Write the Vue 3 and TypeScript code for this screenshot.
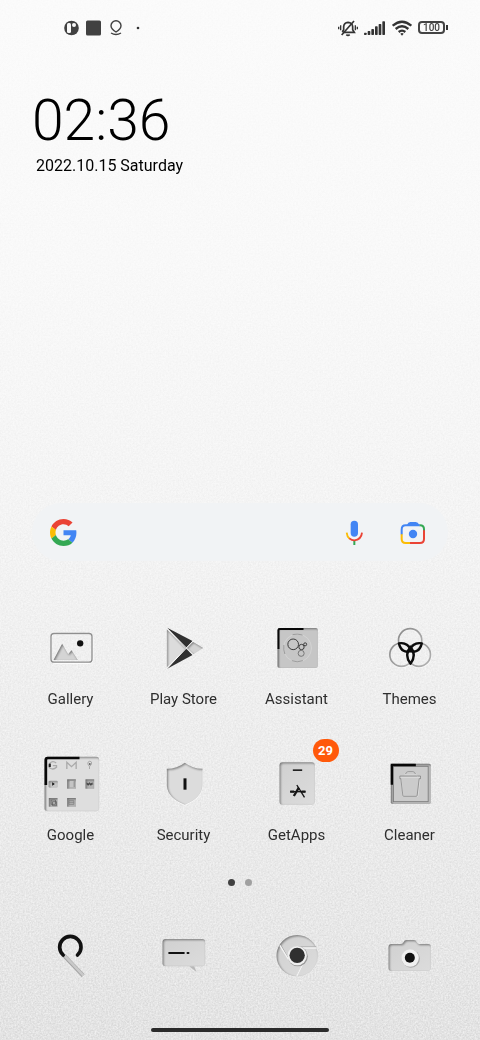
<script setup lang="ts">
interface AppItem {
  id: string
  name: string
  badge?: number
}

const apps: AppItem[] = [
  { id: 'gallery', name: 'Gallery' },
  { id: 'play', name: 'Play Store' },
  { id: 'assistant', name: 'Assistant' },
  { id: 'themes', name: 'Themes' },
  { id: 'folder', name: 'Google' },
  { id: 'security', name: 'Security' },
  { id: 'getapps', name: 'GetApps', badge: 29 },
  { id: 'cleaner', name: 'Cleaner' },
]

const dock: AppItem[] = [
  { id: 'phone', name: 'Phone' },
  { id: 'messages', name: 'Messages' },
  { id: 'chrome', name: 'Chrome' },
  { id: 'camera', name: 'Camera' },
]
</script>

<template>
  <main class="home">
    <svg class="grain" aria-hidden="true">
      <filter id="grain" x="0" y="0" width="100%" height="100%" color-interpolation-filters="sRGB">
        <feTurbulence type="fractalNoise" baseFrequency="0.6" numOctaves="3" seed="4" />
        <feColorMatrix values="1 0 0 0 0  1 0 0 0 0  1 0 0 0 0  0 0 0 0 1" />
      </filter>
      <rect width="100%" height="100%" filter="url(#grain)" />
    </svg>

    <svg class="sprite" width="0" height="0" aria-hidden="true">
      <defs>
        <filter id="inset" x="-10%" y="-10%" width="120%" height="120%" color-interpolation-filters="sRGB">
          <feComponentTransfer in="SourceAlpha"><feFuncA type="table" tableValues="1 0" /></feComponentTransfer>
          <feOffset dx="3" dy="3" />
          <feGaussianBlur stdDeviation="2.500" />
          <feComposite operator="in" in2="SourceAlpha" result="edge" />
          <feComponentTransfer in="edge" result="shade"><feFuncA type="linear" slope="0.45" /></feComponentTransfer>
          <feMerge><feMergeNode in="SourceGraphic" /><feMergeNode in="shade" /></feMerge>
        </filter>
        <linearGradient id="plate" x1="0" y1="0" x2="1" y2="1">
          <stop offset="0" stop-color="#d0d0d0" /><stop offset="1" stop-color="#dcdcdc" />
        </linearGradient>
        <linearGradient id="ring" x1="0" y1="0" x2="1" y2="1">
          <stop offset="0" stop-color="#8a8a8a" /><stop offset="1" stop-color="#b4b4b4" />
        </linearGradient>
      </defs>

      <symbol id="gallery" viewBox="25.5 18 192 192">
        <rect x="63" y="73" width="124" height="87" rx="9" fill="none" stroke="#fff" stroke-width="3" />
        <rect x="61.500" y="70.500" width="123" height="86" rx="9" fill="none" stroke="#8f8f8f" stroke-width="4" />
        <path d="M69 150 95 101l18 32 10-12 19 29z" fill="#d4d4d4" filter="url(#inset)" />
        <circle cx="149" cy="100" r="9.500" fill="#111" />
      </symbol>

      <symbol id="play" viewBox="364.5 18 192 192">
        <path d="M409 58v114l55-57z" fill="#dcdcdc" filter="url(#inset)" />
        <path d="M467 115l20-20 31 19-30 19z" fill="#d3d3d3" filter="url(#inset)" />
        <path d="M410 53l76 40-20 21z" fill="#303030" />
        <path d="M410 176l76-41-20-20z" fill="#303030" />
        <path d="M408 54l80 80M410 175l78-82" stroke="#f8f8f8" stroke-width="3" />
      </symbol>

      <symbol id="assistant" viewBox="43.5 18 192 192">
        <rect x="81" y="54" width="121" height="120" rx="6" fill="#c6c6c6" filter="url(#inset)" />
        <path d="M84 171v-57" stroke="#888" stroke-width="4" />
        <path d="M84 117V61q0-4 4-4h71" fill="none" stroke="#080808" stroke-width="6" />
        <circle cx="141" cy="114" r="42" fill="none" stroke="#dadada" stroke-width="2" />
        <path d="M126 74q15-4 30 1M100 105q-2 14 3 27M124 152q16 7 33 0" fill="none" stroke="#818181" stroke-width="2" />
        <g fill="none" stroke="#3c3c3c" stroke-width="3">
          <circle cx="128" cy="103" r="16" />
          <circle cx="153" cy="111" r="8" />
          <circle cx="164" cy="103" r="4.500" />
          <circle cx="152" cy="130" r="9" stroke="#777" />
        </g>
      </symbol>

      <symbol id="themes" viewBox="382.5 18 192 192">
        <g fill="none" stroke="#fff" stroke-width="4" opacity=".8">
          <circle cx="480" cy="93" r="36" /><circle cx="454" cy="136" r="36" /><circle cx="506" cy="136" r="36" />
        </g>
        <g fill="none" stroke="url(#ring)" stroke-width="5">
          <circle cx="479" cy="91" r="35" /><circle cx="453" cy="134" r="35" /><circle cx="505" cy="134" r="35" />
        </g>
        <g fill="none" stroke="#0c0c0c" stroke-width="7" stroke-linejoin="round">
          <path d="M445 100q25-5 38 22-29 12-38-22z" />
          <path d="M514 100q-25-5-38 22 29 12 38-22z" />
          <path d="M480 110q-20 25 0 51 20-26 0-51z" />
        </g>
      </symbol>

      <symbol id="folder" viewBox="25.5 36 192 192">
        <rect x="42" y="50" width="164" height="164" rx="9" fill="#dedede" filter="url(#inset)" />
        <path d="M45 210v-78" stroke="#999" stroke-width="4" />
        <path d="M46 135V60q0-6 6-6h95" fill="none" stroke="#080808" stroke-width="8" />
        <g fill="none" stroke="#aaa" stroke-width="4">
          <path d="M77 69q-10-8-18 0t-1 15q10 7 20-2v-5H67" />
          <path d="M109 87V67l14 13 14-13v20" />
          <path d="M177 87v-7q-8-9-4-14 5-5 10 0 3 5-6 14" stroke-width="3" />
        </g>
        <path d="M55 71h6v10h-6z" fill="#222" />
        <circle cx="178" cy="72" r="2.500" fill="#222" />
        <rect x="54" y="122" width="28" height="21" rx="4" fill="#c8c8c8" filter="url(#inset)" />
        <path d="M65 127l8 5-8 5z" fill="#111" />
        <g fill="#b4b4b4" filter="url(#inset)">
          <rect x="110" y="118" width="26" height="28" /><rect x="165" y="118" width="26" height="28" />
          <rect x="55" y="174" width="26" height="26" /><rect x="110" y="174" width="26" height="26" />
        </g>
        <path d="M118 123h12v18h-12z" fill="#c4c4c4" />
        <path d="M131 124v17" stroke="#777" stroke-width="2" />
        <path d="M168 132h20M169 128l4 8 4-8 4 8 4-8" fill="none" stroke="#444" stroke-width="3" />
        <path d="M62 180h13v13H62zM66 185h12v12H66z" fill="none" stroke="#555" stroke-width="2" />
        <path d="M115 182h15v11h-15zM115 187h15" fill="none" stroke="#777" stroke-width="2" />
      </symbol>

      <symbol id="security" viewBox="364.5 36 192 192">
        <path d="M463 72q23 18 54 18v49q-4 39-54 57-50-18-54-57V90q31 0 54-18z" fill="#fff" />
        <path d="M463 68q23 18 53 18v51q-3 38-53 57-51-19-54-57V86q31 0 54-18z" fill="#dcdcdc" filter="url(#inset)" />
        <path d="M459 115h9v34h-9z" fill="#111" />
      </symbol>

      <symbol id="getapps" viewBox="43.5 66 192 192">
        <rect x="87" y="97" width="106" height="127" rx="9" fill="url(#plate)" filter="url(#inset)" />
        <path d="M127 118h28v5h-28z" fill="#222" />
        <path d="M139 165l23 37" stroke="#161616" stroke-width="4" />
        <path d="M145 173l-15 25M119 185h12M153 185h12" stroke="#161616" stroke-width="7" />
        <path d="M119 185h46" stroke="#161616" stroke-width="4" />
      </symbol>

      <symbol id="cleaner" viewBox="382.5 66 192 192">
        <rect x="421" y="101" width="120" height="121" rx="5" fill="#bababa" filter="url(#inset)" />
        <rect x="429" y="109" width="104" height="106" fill="#cbcbcb" stroke="#7a7a7a" stroke-width="2.500" />
        <path d="M424 164v-59h72" fill="none" stroke="#080808" stroke-width="7" />
        <path d="M448 142h63M452 148l6 51h44l6-51M462 135h36l4 6M463 132q2-6 10-6h14q8 0 10 6" fill="none" stroke="#e6e6e6" stroke-width="2" />
        <path d="M448 138h62v8h-4l-6 50q0 3-3 3h-37q-3 0-3-3l-6-50h-3zM465 132q2-7 8-7h14q6 0 8 7" fill="none" stroke="#777" stroke-width="2" />
      </symbol>

      <symbol id="phone" viewBox="25.5 162 192 192">
        <path d="M100 256l58 61" stroke="#a2a2a2" stroke-width="12" />
        <path d="M102 257l57 60" stroke="#c9c9c9" stroke-width="8" />
        <path d="M98 255a32 32 0 1 1 43 0" fill="none" stroke="#111" stroke-width="11" stroke-linecap="round" />
      </symbol>

      <symbol id="messages" viewBox="364.5 162 192 192">
        <path d="M476 289l22 17-7-17z" fill="#b8b8b8" />
        <rect x="396" y="207" width="128" height="82" rx="9" fill="url(#plate)" filter="url(#inset)" />
        <path d="M416 249h44M471 249h3" stroke="#111" stroke-width="6" stroke-linecap="round" />
      </symbol>

      <symbol id="chrome" viewBox="43.5 162 192 192">
        <circle cx="140" cy="257" r="62" fill="url(#plate)" filter="url(#inset)" />
        <path d="M140 231h58M116 270 91 225M165 269l-25 47" stroke="#a0a0a0" stroke-width="3" />
        <path d="M140 234h58M115 270 88 226M163 271l-24 47" stroke="#f4f4f4" stroke-width="4" />
        <circle cx="142" cy="259" r="30" fill="#999" />
        <circle cx="140" cy="257" r="29" fill="#efefef" />
        <circle cx="140" cy="256" r="23" fill="#303030" />
      </symbol>

      <symbol id="camera" viewBox="382.5 162 192 192">
        <path d="M423 222h29q5 0 7-5 3-7 9-7h22q6 0 9 7 2 5 7 5h27q8 0 8 8v64q0 9-9 9h-109q-9 0-9-9v-63q0-9 9-9z" fill="url(#plate)" filter="url(#inset)" />
        <circle cx="481" cy="266" r="27" fill="#a8a8a8" />
        <circle cx="479" cy="264" r="26" fill="#f0f0f0" />
        <circle cx="478" cy="263" r="15" fill="#111" />
      </symbol>
    </svg>

    <header class="status">
      <div class="group">
        <svg width="16" height="16" viewBox="0 0 16 16">
          <circle cx="7.500" cy="8" r="7.300" fill="#414141" />
          <rect x="3" y="3" width="4" height="10" rx="1.500" fill="#f8f8f8" />
          <circle cx="10" cy="5" r="2" fill="#f8f8f8" />
        </svg>
        <svg width="16" height="16" viewBox="0 0 16 16"><rect x="0" y="0.500" width="15" height="15" rx="1.500" fill="#414141" /></svg>
        <svg width="16" height="16" viewBox="0 0 16 16" fill="none" stroke="#414141" stroke-width="1.400">
          <path d="M8 12Q3 9 3 5.800a5 5 0 0 1 10 0Q13 9 8 12zM3 13q5 3 10 0" />
        </svg>
        <svg width="16" height="16" viewBox="0 0 16 16"><circle cx="8" cy="8" r="1.300" fill="#333" /></svg>
      </div>
      <div class="group">
        <svg width="20" height="18" viewBox="0 0 60 54" fill="none" stroke="#333" stroke-width="5">
          <path d="M14 40h35l-5-8V23q-1-12-14-13-12 1-13 13v9l-4 7M25 47q5 5 10 0" />
          <path d="M11 48 48 6" />
          <path d="M8 19v15M2 23v8M52 19v15M58 23v8" stroke-width="4" />
        </svg>
        <svg width="22" height="16" viewBox="0 0 66 48" fill="#333">
          <rect x="0" y="38" width="8" height="7" rx="2" /><rect x="11" y="33" width="8" height="12" rx="2" />
          <rect x="22" y="27" width="8" height="18" rx="2" /><rect x="33" y="19" width="8" height="26" rx="2" />
          <rect x="44" y="12" width="8" height="33" rx="2" /><rect x="55" y="4" width="8" height="41" rx="2" />
        </svg>
        <svg width="20" height="16" viewBox="0 0 60 48" fill="none" stroke="#333" stroke-width="7">
          <path d="M2 17Q30-7 58 17M11 27q19-16 38 0M20 36q10-8 20 0" />
          <path d="M25 41q5-4 10 0l-5 6z" fill="#333" stroke="none" />
        </svg>
        <span class="battery"><span class="cell">100</span></span>
      </div>
    </header>

    <section class="clock">
      <time class="time">02:36</time>
      <p class="date">2022.10.15 Saturday</p>
    </section>

    <form class="search" role="search" @submit.prevent>
      <svg width="27" height="27" viewBox="0 0 48 48" aria-hidden="true">
        <path fill="#ea4335" d="M24 9.500c3.540 0 6.710 1.220 9.210 3.600l6.850-6.850C35.900 2.380 30.470 0 24 0 14.620 0 6.510 5.380 2.560 13.220l7.980 6.190C12.430 13.720 17.740 9.500 24 9.500z" />
        <path fill="#4285f4" d="M46.980 24.550c0-1.570-.15-3.090-.38-4.550H24v9.020h12.940c-.58 2.960-2.260 5.480-4.780 7.180l7.730 6c4.510-4.180 7.090-10.360 7.090-17.650z" />
        <path fill="#fbbc05" d="M10.530 28.590c-.48-1.450-.76-2.990-.76-4.590s.27-3.140.76-4.590l-7.980-6.190C.92 16.460 0 20.120 0 24s.92 7.540 2.560 10.780z" />
        <path fill="#34a853" d="M24 48c6.480 0 11.930-2.130 15.890-5.810l-7.730-6c-2.150 1.450-4.920 2.300-8.160 2.300-6.260 0-11.570-4.220-13.470-9.910l-7.980 6.190C6.510 42.620 14.620 48 24 48z" />
      </svg>
      <input class="query" type="search" aria-label="Search" />
      <button class="tool" type="button" aria-label="Voice search">
        <svg width="28" height="28" viewBox="960 84 84 84" fill="none">
          <rect x="992" y="92" width="22" height="48" rx="11" fill="#4285f4" />
          <path d="M1003 151v14" stroke="#34a853" stroke-width="6" />
          <path d="M980 128q1 12 9 18" stroke="#fbbc05" stroke-width="5.500" />
          <path d="M988 145q7 6 15 6 21-2 23-23" stroke="#ea4335" stroke-width="5.500" />
        </svg>
      </button>
      <button class="tool" type="button" aria-label="Lens search">
        <svg width="28" height="28" viewBox="1137 84 84 84" fill="none" stroke-width="6">
          <path d="M1145 132v15q0 12 12 12h14" stroke="#fbbc05" />
          <path d="M1170 159h30q12 0 12-12v-27" stroke="#ea4335" />
          <path d="M1198 106h2q12 0 12 12v3" stroke="#34a853" />
          <path d="M1145 133v-14q0-13 12-13h42" stroke="#4285f4" />
          <path d="M1161 105q3-9 10-9h16q7 0 11 9z" fill="#4285f4" />
          <circle cx="1179" cy="132" r="12.500" fill="#4285f4" />
        </svg>
      </button>
    </form>

    <nav class="grid" aria-label="Apps">
      <button v-for="app in apps" :key="app.id" class="app" type="button">
        <span class="icon">
          <svg width="64" height="64" aria-hidden="true"><use :href="'#' + app.id" /></svg>
          <span v-if="app.badge" class="badge">{{ app.badge }}</span>
        </span>
        <span class="label">{{ app.name }}</span>
      </button>
    </nav>

    <div class="pages" aria-hidden="true">
      <span class="dot current"></span>
      <span class="dot"></span>
    </div>

    <nav class="grid" aria-label="Dock">
      <button v-for="app in dock" :key="app.id" class="app" type="button" :aria-label="app.name">
        <svg width="64" height="64" aria-hidden="true"><use :href="'#' + app.id" /></svg>
      </button>
    </nav>

    <div class="handle"></div>
  </main>
</template>

<style>
body {
  margin: 0;
}
</style>

<style scoped>
.home {
  position: relative;
  isolation: isolate;
  box-sizing: border-box;
  display: flex;
  flex-direction: column;
  min-height: 100vh;
  padding-bottom: 8px;
  background: linear-gradient(#fbfbfb 0%, #f9f9f9 25%, #f4f4f4 50%, #eeeeee 68%, #e8e8e8 88%, #e3e3e3 100%);
  color: #2e2e2e;
  font-family: Roboto, "Liberation Sans", sans-serif;
}
.grain {
  position: absolute;
  inset: 0;
  z-index: -1;
  width: 100%;
  height: 100%;
  mix-blend-mode: overlay;
  opacity: 0.7;
}
.sprite {
  position: absolute;
}
svg {
  display: block;
}
.status {
  display: flex;
  justify-content: space-between;
  align-items: center;
  height: 55px;
  padding: 0 32px 0 64px;
}
.group {
  display: flex;
  align-items: center;
  gap: 6px;
}
.battery {
  display: flex;
  align-items: center;
  gap: 1px;
}
.battery::after {
  content: "";
  width: 2px;
  height: 5px;
  background: #333;
}
.cell {
  box-sizing: border-box;
  width: 27px;
  height: 13px;
  border: 2px solid #444;
  border-radius: 4px;
  color: #444;
  font-size: 10px;
  font-weight: 500;
  line-height: 10px;
  text-align: center;
}
.clock {
  padding: 36px 32px 0;
  color: #000;
}
.time {
  display: block;
  font-size: 57px;
  font-weight: 300;
  line-height: 60px;
}
.date {
  margin: 4px 4px 0;
  font-size: 16px;
  line-height: 22px;
}
.search {
  display: flex;
  align-items: center;
  height: 58px;
  margin: auto 32px 55px;
  padding: 0 21px 0 18px;
  border-radius: 29px;
  background: #f1f3f5;
}
.query {
  flex: 1;
  min-width: 0;
  border: 0;
  outline: 0;
  background: none;
  font: inherit;
}
.tool {
  margin-left: 31px;
  padding: 0;
  border: 0;
  background: none;
}
.grid {
  display: grid;
  grid-template-columns: repeat(4, 1fr);
  row-gap: 43px;
  padding: 0 14px;
}
.app {
  display: flex;
  flex-direction: column;
  align-items: center;
  gap: 9px;
  padding: 0;
  border: 0;
  background: none;
  color: inherit;
  font: inherit;
}
.icon {
  position: relative;
}
.badge {
  position: absolute;
  top: -13px;
  left: 48px;
  min-width: 26px;
  border-radius: 12px;
  background: #ff590a;
  color: #fff;
  font-size: 13px;
  font-weight: 700;
  line-height: 23px;
  text-align: center;
}
.label {
  font-size: 15px;
  line-height: 20px;
}
.pages {
  display: flex;
  justify-content: center;
  gap: 10px;
  padding: 34px 0 38px;
}
.dot {
  width: 7px;
  height: 7px;
  border-radius: 50%;
  background: #a0a0a0;
}
.dot.current {
  background: #414141;
}
.handle {
  width: 37%;
  height: 4px;
  margin: 40px auto 0;
  border-radius: 2px;
  background: #2b2b2b;
}
</style>
